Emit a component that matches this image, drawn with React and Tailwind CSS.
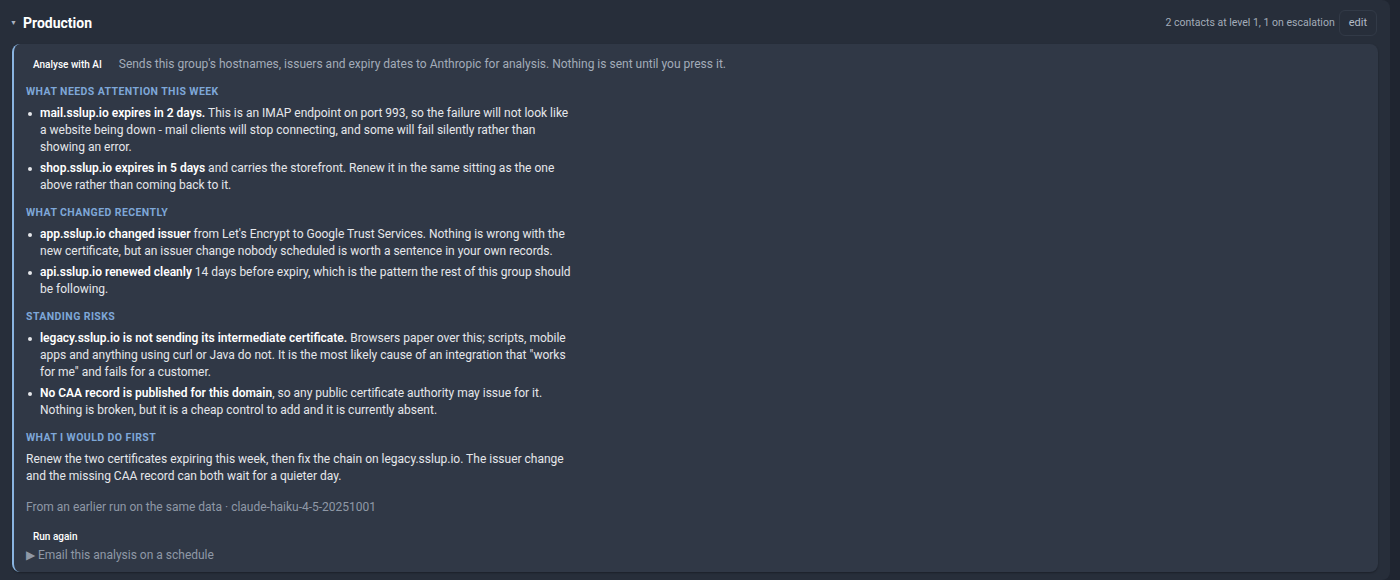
import React from 'react';

const Heading = ({ first, children }) => (
  <h3
    className={
      first
        ? 'mt-[8px] mb-[5px] text-[10.5px] font-bold uppercase tracking-[0.04em] text-[#7ea7d8]'
        : 'mt-[10px] mb-[5px] text-[10.5px] font-bold uppercase tracking-[0.04em] text-[#7ea7d8]'
    }
  >
    {children}
  </h3>
);

const Item = ({ lead, children }) => (
  <li className="flex gap-[8px]">
    <span className="mt-[7px] h-[4px] w-[4px] shrink-0 rounded-full bg-[#e5e7eb]" />
    <p>
      <b className="font-semibold text-white">{lead}</b>
      {children}
    </p>
  </li>
);

export default function App() {
  return (
    <div className="flex h-[580px] w-[1400px] bg-[#1f2530] font-['Roboto',sans-serif]">
      <section className="flex w-[1390px] flex-col rounded-r-lg bg-[#272e3a] px-[12px] pb-[8px]">
        <header className="flex h-[44px] shrink-0 items-center pt-[2px]">
          <span className="ml-[-2px] mr-[6px] text-[7px] text-[#aab2bf]">▼</span>
          <h2 className="text-[14px] font-bold text-white">Production</h2>
          <span className="ml-auto text-[10.5px] text-[#a3acb9]">2 contacts at level 1, 1 on escalation</span>
          <button className="ml-[4px] mr-[1px] rounded-md border border-[#323a47] px-[9px] py-[4px] text-[11px] text-[#b3bbc7]">edit</button>
        </header>

        <div className="flex-1 rounded-lg border-l-2 border-[#8ab4e0] bg-[#303846] pl-[12px] pr-[20px] pt-[10px] text-[12px] leading-[17px] text-[#e5e7eb] shadow-[0_1px_2px_rgba(0,0,0,0.3)]">
          <div className="flex items-center gap-[10px]">
            <button className="rounded px-[7px] py-[2px] text-[10px] font-medium text-white">Analyse with AI</button>
            <span className="text-[12px] text-[#a3acb9]">
              Sends this group's hostnames, issuers and expiry dates to Anthropic for analysis. Nothing is sent until you press it.
            </span>
          </div>

          <div className="w-[547px]">
            <Heading first>What needs attention this week</Heading>
            <ul className="flex flex-col gap-[4px] pl-[2px]">
              <Item lead="mail.sslup.io expires in 2 days.">
                {' '}This is an IMAP endpoint on port 993, so the failure will not look like a website being down - mail clients will stop connecting, and some will fail silently rather than showing an error.
              </Item>
              <Item lead="shop.sslup.io expires in 5 days">
                {' '}and carries the storefront. Renew it in the same sitting as the one above rather than coming back to it.
              </Item>
            </ul>

            <Heading>What changed recently</Heading>
            <ul className="flex flex-col gap-[4px] pl-[2px]">
              <Item lead="app.sslup.io changed issuer">
                {' '}from Let's Encrypt to Google Trust Services. Nothing is wrong with the new certificate, but an issuer change nobody scheduled is worth a sentence in your own records.
              </Item>
              <Item lead="api.sslup.io renewed cleanly">
                {' '}14 days before expiry, which is the pattern the rest of this group should be following.
              </Item>
            </ul>

            <Heading>Standing risks</Heading>
            <ul className="flex flex-col gap-[4px] pl-[2px]">
              <Item lead="legacy.sslup.io is not sending its intermediate certificate.">
                {' '}Browsers paper over this; scripts, mobile apps and anything using curl or Java do not. It is the most likely cause of an integration that "works for me" and fails for a customer.
              </Item>
              <Item lead="No CAA record is published for this domain">
                , so any public certificate authority may issue for it. Nothing is broken, but it is a cheap control to add and it is currently absent.
              </Item>
            </ul>

            <Heading>What I would do first</Heading>
            <p>
              Renew the two certificates expiring this week, then fix the chain on legacy.sslup.io. The issuer change and the missing CAA record can both wait for a quieter day.
            </p>

            <p className="mt-[14px] text-[#8f98a6]">From an earlier run on the same data · claude-haiku-4-5-20251001</p>

            <button className="mt-[11px] rounded px-[7px] py-[1px] text-[10px] font-medium text-white">Run again</button>
            <p className="mt-[1px] text-[#8f98a6]">▶ Email this analysis on a schedule</p>
          </div>
        </div>
      </section>
    </div>
  );
}
